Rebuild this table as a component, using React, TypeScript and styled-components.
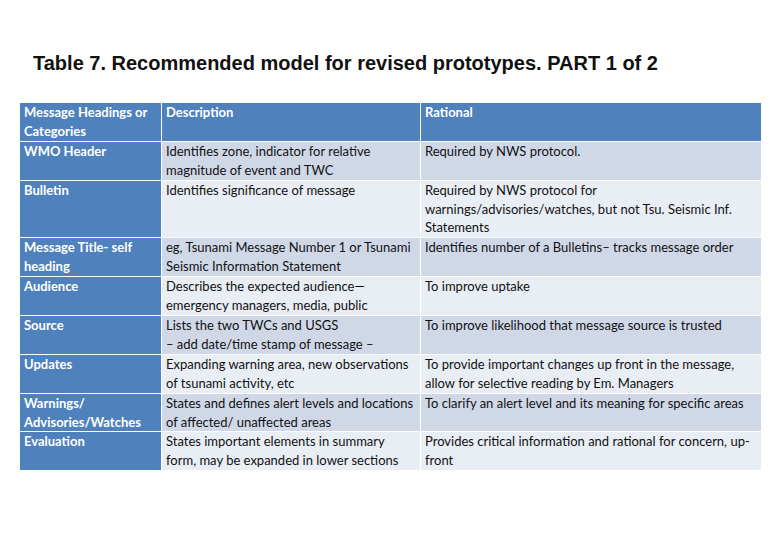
import React from "react";
import styled, { createGlobalStyle } from "styled-components";

const GlobalStyle = createGlobalStyle`
  html, body {
    margin: 0;
    padding: 0;
    background: #ffffff;
  }
`;

const Page = styled.div`
  width: 780px;
  height: 540px;
  box-sizing: border-box;
  padding: 51px 0 0 20px;
  background: #fff;
`;

const Title = styled.h1`
  margin: 0 0 0 13px;
  font-family: "Liberation Sans", Arial, sans-serif;
  font-size: 20px;
  font-weight: 700;
  line-height: 24px;
  color: #111;
  letter-spacing: 0px;
`;

const Grid = styled.div`
  margin-top: 28px;
  width: 741px;
  display: grid;
  grid-template-columns: 141px 258px 340px;
  column-gap: 1px;
  row-gap: 1px;
  background: #fff;
  font-family: Lato, "Open Sans", sans-serif;
  font-size: 13px;
  line-height: 18.9px;
`;

const Cell = styled.div<{ $tone: "head" | "dark" | "light" }>`
  padding: 0 3px 0 4px;
  min-height: 37px;
  box-sizing: border-box;
  white-space: nowrap;
  overflow: hidden;
  color: ${(p) => (p.$tone === "head" ? "#fff" : "#111")};
  font-weight: ${(p) => (p.$tone === "head" ? 700 : 400)};
  background: ${(p) =>
    p.$tone === "head" ? "#4f81bd" : p.$tone === "dark" ? "#d0d8e8" : "#e9edf4"};
`;

const Line = styled.div``;

const rows: [string[], string[], string[]][] = [
  [
    ["WMO Header"],
    ["Identifies zone, indicator for relative", "magnitude of event and TWC"],
    ["Required by NWS protocol."],
  ],
  [
    ["Bulletin"],
    ["Identifies significance of message"],
    [
      "Required by NWS protocol for",
      "warnings/advisories/watches, but not Tsu. Seismic Inf.",
      "Statements",
    ],
  ],
  [
    ["Message Title- self", "heading"],
    ["eg, Tsunami Message Number 1 or Tsunami", "Seismic Information Statement"],
    ["Identifies number of a Bulletins– tracks message order"],
  ],
  [
    ["Audience"],
    ["Describes the expected audience—", "emergency managers, media, public"],
    ["To improve uptake"],
  ],
  [
    ["Source"],
    ["Lists the two TWCs and USGS", "– add date/time stamp of message –"],
    ["To improve likelihood that message source is trusted"],
  ],
  [
    ["Updates"],
    ["Expanding warning area, new observations", "of tsunami activity, etc"],
    [
      "To provide important changes up front in the message,",
      "allow for selective reading by Em. Managers",
    ],
  ],
  [
    ["Warnings/", "Advisories/Watches"],
    ["States and defines alert levels and locations", "of affected/ unaffected areas"],
    ["To clarify an alert level and its meaning for specific areas"],
  ],
  [
    ["Evaluation"],
    ["States important elements in summary", "form, may be expanded in lower sections"],
    ["Provides critical information and rational for concern, up-", "front"],
  ],
];

const Lines = ({ text }: { text: string[] }) => (
  <>
    {text.map((t) => (
      <Line key={t}>{t}</Line>
    ))}
  </>
);

export default function App() {
  return (
    <>
      <GlobalStyle />
      <Page>
        <Title>Table 7. Recommended model for revised prototypes. PART 1 of 2</Title>
        <Grid>
          <Cell $tone="head">
            <Lines text={["Message Headings or", "Categories"]} />
          </Cell>
          <Cell $tone="head">Description</Cell>
          <Cell $tone="head">Rational</Cell>
          {rows.map((r, i) => {
            const tone = i % 2 === 0 ? "dark" : "light";
            return (
              <React.Fragment key={r[0][0]}>
                <Cell $tone="head">
                  <Lines text={r[0]} />
                </Cell>
                <Cell $tone={tone}>
                  <Lines text={r[1]} />
                </Cell>
                <Cell $tone={tone}>
                  <Lines text={r[2]} />
                </Cell>
              </React.Fragment>
            );
          })}
        </Grid>
      </Page>
    </>
  );
}
